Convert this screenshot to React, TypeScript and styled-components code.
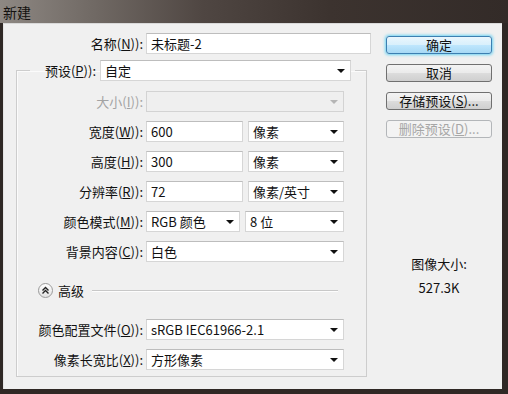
import React from 'react';
import styled, { createGlobalStyle, css } from 'styled-components';

const GlobalStyle = createGlobalStyle`
    html, body {
        margin: 0;
        padding: 0;
        background: #2f2825;
    }
    body {
        font-family: "Noto Sans CJK SC", "Noto Sans", sans-serif;
        font-size: 13px;
        color: #111;
    }
`;

const Window = styled('div')`
    width: 508px;
    height: 394px;
    display: flex;
    flex-direction: column;
    background: #2f2825;
`;

const TitleBar = styled('div')`
    height: 23px;
    flex: none;
    display: flex;
    align-items: center;
    padding-left: 3px;
    font-size: 14px;
    color: #141210;
    background: linear-gradient(to right, #8e8883 0%, #716a65 18%, #4f4642 40%, #3c332f 65%, #332b28 100%);
`;

const Body = styled('div')`
    flex: 1;
    margin: 0 6px 5px 3px;
    background: #f0f0f0;
    border-top: 1px solid #d9d9d9;
    border-left: 1px solid #e4e4e4;
    display: flex;
    gap: 13px;
    padding: 9px 0 0 12px;
`;

const LeftPane = styled('div')`
    width: 357px;
    display: flex;
    flex-direction: column;
`;

const NameRow = styled('div')`
    display: flex;
    align-items: center;
    gap: 3px;
    padding-left: 1px;
    margin-bottom: 6px;
`;

const Label = styled('label')<{ $width: number; $disabled?: boolean }>`
    width: ${p => p.$width}px;
    flex: none;
    text-align: right;
    white-space: nowrap;
    line-height: 21px;
    color: ${p => (p.$disabled ? '#a3a3a3' : '#111')};
`;

const fieldBox = css`
    height: 21px;
    box-sizing: border-box;
    border: 1px solid #d6d6d6;
    border-top-color: #bdbdbd;
    background: #fff;
    line-height: 19px;
    white-space: nowrap;
    overflow: hidden;
`;

const TextInput = styled('div')<{ $width: number }>`
    ${fieldBox};
    width: ${p => p.$width}px;
    padding-left: 4px;
`;

const SelectBox = styled('div')<{ $width: number; $disabled?: boolean }>`
    ${fieldBox};
    width: ${p => p.$width}px;
    display: flex;
    align-items: center;
    justify-content: space-between;
    padding: 0 5px 0 4px;
    ${p =>
        p.$disabled &&
        css`
            background: #efefef;
            border-color: #d3d3d3;
        `}
`;

const Arrow = styled('span')<{ $disabled?: boolean }>`
    width: 0;
    height: 0;
    border-left: 4px solid transparent;
    border-right: 4px solid transparent;
    border-top: 4px solid ${p => (p.$disabled ? '#b5b5b5' : '#111')};
`;

const Group = styled('fieldset')`
    width: 351px;
    box-sizing: border-box;
    margin: 0;
    padding: 0 0 6px 0;
    border: 1px solid #cdcdcd;
    box-shadow: inset 1px 1px 0 #fbfbfb;
`;

const Legend = styled('legend')`
    margin-left: 13px;
    padding: 0 4px 0 0;
    display: flex;
    align-items: center;
    gap: 4px;
`;

const GroupBody = styled('div')`
    display: flex;
    flex-direction: column;
    gap: 9px;
    padding-top: 10px;
`;

const FieldRow = styled('div')`
    display: flex;
    align-items: center;
    gap: 3px;
`;

const Pair = styled('div')`
    display: flex;
    gap: 5px;
`;

const AdvancedRow = styled('div')`
    display: flex;
    align-items: center;
    height: 21px;
    margin: 9px 0;
    padding-left: 21px;
    gap: 5px;
`;

const Toggle = styled('span')`
    width: 15px;
    height: 15px;
    box-sizing: border-box;
    border-radius: 50%;
    border: 1px solid #9a9a9a;
    background: linear-gradient(#ffffff, #e2e2e2);
    display: flex;
    align-items: center;
    justify-content: center;
`;

const Rule = styled('span')`
    width: 246px;
    margin-left: 3px;
    border-top: 1px solid #c8c8c8;
    border-bottom: 1px solid #fdfdfd;
`;

const RightPane = styled('div')`
    width: 106px;
    display: flex;
    flex-direction: column;
    gap: 10px;
    padding-top: 3px;
`;

const Button = styled('div')<{ $primary?: boolean; $disabled?: boolean }>`
    height: 18px;
    box-sizing: border-box;
    border-radius: 3px;
    border: 1px solid #707070;
    background: linear-gradient(#f3f3f3 0%, #ebebeb 48%, #dcdcdc 52%, #cfcfcf 100%);
    text-align: center;
    line-height: 16px;
    color: #111;
    ${p =>
        p.$primary &&
        css`
            border-color: #3c7fb1;
            background: linear-gradient(#eaf6fd 0%, #d9f0fc 48%, #bee6fd 52%, #a7d9f5 100%);
            box-shadow: 0 0 3px 1px #6ed3f3;
        `}
    ${p =>
        p.$disabled &&
        css`
            border-color: #b3b6b9;
            background: #f3f3f3;
            color: #a6a6a6;
        `}
`;

const SizeInfo = styled('div')`
    margin-top: 104px;
    text-align: center;
    line-height: 24px;
`;

const Key = ({ k }: { k: string }) => <u>{k}</u>;

type Field = { label: string; k: string; rest: string };

const lbl = (f: Field) => (
    <>
        {f.label}(<Key k={f.k} />){f.rest}
    </>
);

export default function App() {
    return (
        <>
            <GlobalStyle />
            <Window>
                <TitleBar>新建</TitleBar>
                <Body>
                    <LeftPane>
                        <NameRow>
                            <Label $width={126}>{lbl({ label: '名称', k: 'N', rest: '):' })}</Label>
                            <TextInput $width={225}>未标题-2</TextInput>
                        </NameRow>
                        <Group>
                            <Legend>
                                <Label $width={66}>{lbl({ label: '预设', k: 'P', rest: '):' })}</Label>
                                <SelectBox $width={251}>
                                    自定<Arrow />
                                </SelectBox>
                            </Legend>
                            <GroupBody>
                                <FieldRow>
                                    <Label $width={126} $disabled>
                                        {lbl({ label: '大小', k: 'I', rest: '):' })}
                                    </Label>
                                    <SelectBox $width={198} $disabled>
                                        <span />
                                        <Arrow $disabled />
                                    </SelectBox>
                                </FieldRow>
                                <FieldRow>
                                    <Label $width={126}>{lbl({ label: '宽度', k: 'W', rest: '):' })}</Label>
                                    <Pair>
                                        <TextInput $width={97}>600</TextInput>
                                        <SelectBox $width={96}>
                                            像素<Arrow />
                                        </SelectBox>
                                    </Pair>
                                </FieldRow>
                                <FieldRow>
                                    <Label $width={126}>{lbl({ label: '高度', k: 'H', rest: '):' })}</Label>
                                    <Pair>
                                        <TextInput $width={97}>300</TextInput>
                                        <SelectBox $width={96}>
                                            像素<Arrow />
                                        </SelectBox>
                                    </Pair>
                                </FieldRow>
                                <FieldRow>
                                    <Label $width={126}>{lbl({ label: '分辨率', k: 'R', rest: '):' })}</Label>
                                    <Pair>
                                        <TextInput $width={97}>72</TextInput>
                                        <SelectBox $width={96}>
                                            像素/英寸<Arrow />
                                        </SelectBox>
                                    </Pair>
                                </FieldRow>
                                <FieldRow>
                                    <Label $width={126}>{lbl({ label: '颜色模式', k: 'M', rest: '):' })}</Label>
                                    <Pair>
                                        <SelectBox $width={94}>
                                            RGB 颜色<Arrow />
                                        </SelectBox>
                                        <SelectBox $width={99}>
                                            8 位<Arrow />
                                        </SelectBox>
                                    </Pair>
                                </FieldRow>
                                <FieldRow>
                                    <Label $width={126}>{lbl({ label: '背景内容', k: 'C', rest: '):' })}</Label>
                                    <SelectBox $width={198}>
                                        白色<Arrow />
                                    </SelectBox>
                                </FieldRow>
                                <AdvancedRow>
                                    <Toggle>
                                        <svg width="9" height="9" viewBox="0 0 9 9">
                                            <path d="M1.5 4.5 L4.5 1.5 L7.5 4.5 M1.5 7.5 L4.5 4.5 L7.5 7.5" fill="none" stroke="#222" strokeWidth="1.4" />
                                        </svg>
                                    </Toggle>
                                    高级
                                    <Rule />
                                </AdvancedRow>
                                <FieldRow>
                                    <Label $width={126}>{lbl({ label: '颜色配置文件', k: 'O', rest: '):' })}</Label>
                                    <SelectBox $width={198}>
                                        sRGB IEC61966-2.1<Arrow />
                                    </SelectBox>
                                </FieldRow>
                                <FieldRow>
                                    <Label $width={126}>{lbl({ label: '像素长宽比', k: 'X', rest: '):' })}</Label>
                                    <SelectBox $width={198}>
                                        方形像素<Arrow />
                                    </SelectBox>
                                </FieldRow>
                            </GroupBody>
                        </Group>
                    </LeftPane>
                    <RightPane>
                        <Button $primary>确定</Button>
                        <Button>取消</Button>
                        <Button>
                            存储预设(<Key k="S" />)...
                        </Button>
                        <Button $disabled>
                            删除预设(<Key k="D" />)...
                        </Button>
                        <SizeInfo>
                            图像大小:
                            <br />
                            527.3K
                        </SizeInfo>
                    </RightPane>
                </Body>
            </Window>
        </>
    );
}
